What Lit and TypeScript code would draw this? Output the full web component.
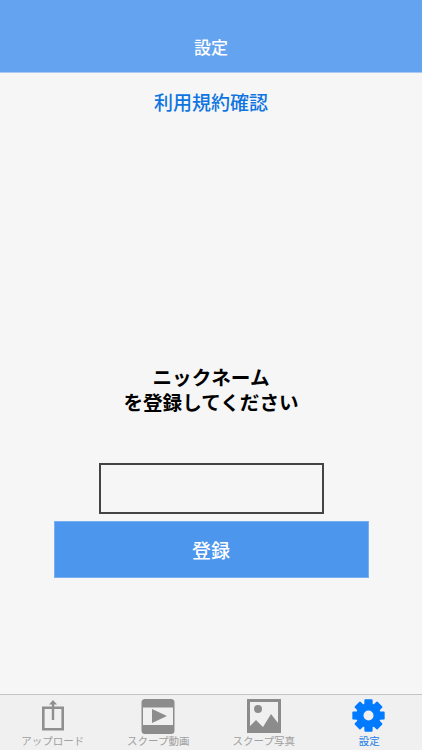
import { LitElement, html, css, svg, unsafeCSS } from "lit";
import { customElement } from "lit/decorators.js";

const FONT = unsafeCSS(`"Noto Sans CJK JP", "Liberation Sans", sans-serif`);

const gearPath = (() => {
  const cx = 16.5, cy = 16.5, teeth = 8, rOut = 15.7, rIn = 11.6;
  let d = "";
  for (let i = 0; i < teeth; i++) {
    const a = (i * 2 * Math.PI) / teeth - Math.PI / 2;
    const w = 0.21, w2 = 0.3;
    const pts = [
      [rIn, a - w2],
      [rOut, a - w],
      [rOut, a + w],
      [rIn, a + w2],
    ];
    for (const [r, t] of pts) {
      d += `${d ? "L" : "M"}${(cx + r * Math.cos(t)).toFixed(2)} ${(cy + r * Math.sin(t)).toFixed(2)}`;
    }
  }
  return d + "Z";
})();

const icons = {
  upload: svg`<svg class="ic" viewBox="0 0 34 34"><g fill="#8f8f8f">
    <path fill-rule="evenodd" d="M6 7.5H28V31.5H6ZM8.6 10.1V28.9H25.4V10.1Z"/>
    <rect x="15.8" y="4" width="2.4" height="17"/>
    <path d="M13 5.6 17 1l4 4.6Z"/></g></svg>`,
  video: svg`<svg class="ic" viewBox="0 0 34 34">
    <rect x="0.5" y="0" width="33" height="35" rx="3.5" fill="#8c8c8c"/>
    <rect x="2" y="8.5" width="30" height="17.5" fill="#f0f0f0"/>
    <path d="M11 10 26 17 11 24Z" fill="#8c8c8c"/></svg>`,
  photo: svg`<svg class="ic" viewBox="0 0 34 34">
    <path fill="#8c8c8c" fill-rule="evenodd" d="M0 0H34V34H0ZM3 3V31H31V3Z"/>
    <circle cx="11" cy="10" r="4" fill="#8c8c8c"/>
    <path fill="#8c8c8c" d="M3 27 9 21 16 28 24 15 31 24V31H3Z"/></svg>`,
  gear: svg`<svg class="ic" viewBox="0 0 34 34">
    <path fill="#007aff" stroke="#007aff" stroke-width="1.6" stroke-linejoin="round" d="${gearPath}"/>
    <circle cx="16.5" cy="16.5" r="5" fill="#f0f0f0"/></svg>`,
};

@customElement("app-root")
export class AppRoot extends LitElement {
  static styles = css`
    :host {
      display: flex;
      flex-direction: column;
      width: 422px;
      height: 750px;
      overflow: hidden;
      background: #f6f6f6;
      font-family: ${FONT};
    }
    .nav {
      height: 73px;
      flex: none;
      box-sizing: border-box;
      padding-top: 34px;
      background: #64a3ef;
      border-bottom: 1px solid #a9c9f2;
      color: #fff;
      font-size: 17px;
      line-height: 26px;
      font-weight: 500;
      text-align: center;
    }
    .terms {
      margin-top: 15px;
      height: 28px;
      line-height: 28px;
      font-size: 19px;
      font-weight: 500;
      color: #0f75e0;
      text-align: center;
    }
    .main {
      flex: 1;
      display: flex;
      flex-direction: column;
      align-items: center;
    }
    .prompt {
      margin-top: 248px;
      font-size: 19.6px;
      line-height: 25px;
      font-weight: 700;
      color: #000;
      text-align: center;
    }
    .field {
      margin-top: 49px;
      box-sizing: border-box;
      width: 225px;
      height: 51px;
      border: 2px solid #444;
      background: #f6f6f6;
    }
    .submit {
      margin-top: 7px;
      box-sizing: border-box;
      width: 315px;
      height: 57px;
      background: #4c96ee;
      border: 1px solid #79b0f2;
      color: #fff;
      font-size: 19px;
      font-weight: 500;
      line-height: 55px;
      text-align: center;
    }
    .tabs {
      flex: none;
      height: 56px;
      box-sizing: border-box;
      border-top: 1px solid #c4c4c4;
      background: #f0f0f0;
      display: grid;
      grid-template-columns: repeat(4, 105.5px);
    }
    .tab {
      display: flex;
      flex-direction: column;
      align-items: center;
      padding-top: 4px;
      font-size: 10.5px;
      line-height: 14px;
      color: #a0a0a0;
    }
    .tab.on { color: #1a7fe8; }
    .ic { width: 34px; height: 34px; display: block; margin-bottom: 1px; overflow: visible; }
  `;

  render() {
    const tabs = [
      ["アップロード", icons.upload, false],
      ["スクープ動画", icons.video, false],
      ["スクープ写真", icons.photo, false],
      ["設定", icons.gear, true],
    ] as const;
    return html`
      <div class="nav">設定</div>
      <div class="main">
        <div class="terms">利用規約確認</div>
        <div class="prompt">ニックネーム<br />を登録してください</div>
        <div class="field"></div>
        <div class="submit">登録</div>
      </div>
      <div class="tabs">
        ${tabs.map(
          ([label, icon, on]) =>
            html`<div class="tab ${on ? "on" : ""}">${icon}<span>${label}</span></div>`
        )}
      </div>
    `;
  }
}
